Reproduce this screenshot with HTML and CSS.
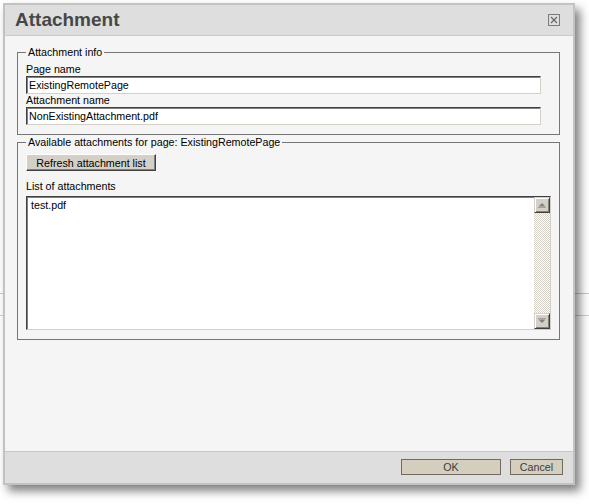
FILE: index.html
```html
<!DOCTYPE html>
<html>
<head>
<meta charset="utf-8">
<link rel="stylesheet" href="styles.css">
</head>
<body>
<div class="dialog">
  <div class="dlg-header">
    <h1 class="dlg-title">Attachment</h1>
    <button class="close-btn" aria-label="Close">
      <svg width="12" height="12" viewBox="0 0 12 12"><rect x="0.5" y="0.5" width="11" height="11" fill="none" stroke="#7c7c7c"/><path d="M3 3L9 9M9 3L3 9" stroke="#666" stroke-width="1.1"/></svg>
    </button>
  </div>
  <div class="dlg-body">
    <fieldset class="group group-info">
      <legend class="group-legend">Attachment info</legend>
      <label class="field-label">Page name</label>
      <input class="text-input" type="text" value="ExistingRemotePage">
      <label class="field-label">Attachment name</label>
      <input class="text-input" type="text" value="NonExistingAttachment.pdf">
    </fieldset>
    <fieldset class="group group-list">
      <legend class="group-legend">Available attachments for page: ExistingRemotePage</legend>
      <button class="btn-refresh">Refresh attachment list</button>
      <div class="field-label list-label">List of attachments</div>
      <div class="listbox">
        <div class="list-items">test.pdf</div>
        <div class="scrollbar">
          <div class="sb-btn"><svg width="14" height="14" viewBox="0 0 14 14"><path d="M3.5 8.5L7 5L10.5 8.5Z" fill="#808080"/><path d="M3 9.5H11" stroke="#a0a0a0"/></svg></div>
          <div class="sb-track"></div>
          <div class="sb-btn"><svg width="14" height="14" viewBox="0 0 14 14"><path d="M3.5 5.5L7 9L10.5 5.5Z" fill="#808080"/><path d="M3 4.5H11" stroke="#a0a0a0"/></svg></div>
        </div>
      </div>
    </fieldset>
  </div>
  <div class="dlg-footer">
    <button class="btn btn-ok">OK</button>
    <button class="btn btn-cancel">Cancel</button>
  </div>
</div>
</body>
</html>
```
FILE: styles.css
```css
html, body {
  margin: 0;
  padding: 0;
}
body {
  width: 589px;
  height: 504px;
  overflow: hidden;
  font-family: "Liberation Sans", Arial, sans-serif;
  font-size: 10.7px;
  color: #000;
  background:
    linear-gradient(#c8c8c8, #c8c8c8) 0 293px / 100% 1px no-repeat,
    linear-gradient(#c4d2dc, #c4d2dc) 0 315px / 100% 1px no-repeat,
    #fff;
}
.dialog {
  margin: 3px 0 0 3px;
  width: 572px;
  box-sizing: border-box;
  border: 2px solid #c2c2c2;
  box-shadow: 5px 6px 9px rgba(0, 0, 0, 0.5);
  background: #f5f5f5;
}
.dlg-header {
  height: 31px;
  box-sizing: border-box;
  background: #dedede;
  border-bottom: 1px solid #cdc9bd;
  display: flex;
  align-items: center;
  justify-content: space-between;
  padding: 0 13px 0 10px;
}
.dlg-title {
  margin: 0;
  font: 700 19px/30px "Liberation Sans", Arial, sans-serif;
  color: #474747;
}
.close-btn {
  width: 12px;
  height: 12px;
  padding: 0;
  margin: 0 0 1px 0;
  border: 0;
  background: transparent;
  display: block;
}
.close-btn svg {
  display: block;
}
.dlg-body {
  height: 416px;
  box-sizing: border-box;
  padding: 10px 13px 0 12px;
  background: #f5f5f5;
  border-bottom: 1px solid #cbc6b8;
}
.group {
  margin: 0;
  min-width: 0;
  border: 1px solid #767676;
  padding: 5px 8px 9px 8px;
}
.group-list {
  margin-top: 1px;
  padding-top: 6px;
}
.group-legend {
  padding: 0 2px;
  font-size: 10.7px;
  line-height: 12px;
}
.field-label {
  display: block;
  line-height: 13px;
}
.text-input {
  display: block;
  width: 515px;
  height: 18px;
  box-sizing: border-box;
  margin: 0;
  padding: 0 2px;
  font: 10.7px "Liberation Sans", Arial, sans-serif;
  color: #000;
  background: #fff;
  border: 1px solid;
  border-color: #404040 #d4d0c8 #d4d0c8 #404040;
  box-shadow: inset 1px 1px 0 #808080;
  outline: none;
}
.btn-refresh {
  display: block;
  width: 130px;
  height: 17px;
  margin: 0;
  padding: 0;
  font: 10.7px "Liberation Sans", Arial, sans-serif;
  color: #000;
  background: #d4d0c8;
  border: 1px solid;
  border-color: #fff #404040 #404040 #fff;
  box-shadow: inset -1px -1px 0 #808080;
}
.list-label {
  margin: 9px 0 3px;
}
.listbox {
  display: flex;
  width: 525px;
  height: 134px;
  box-sizing: border-box;
  background: #fff;
  border: 1px solid;
  border-color: #404040 #d4d0c8 #d4d0c8 #404040;
  box-shadow: inset 1px 1px 0 #808080;
}
.list-items {
  flex: 1;
  padding: 2px 4px;
  line-height: 13px;
}
.scrollbar {
  width: 16px;
  display: flex;
  flex-direction: column;
}
.sb-btn {
  width: 16px;
  height: 16px;
  box-sizing: border-box;
  background: #d4d0c8;
  border: 1px solid;
  border-color: #d4d0c8 #404040 #404040 #d4d0c8;
  box-shadow: inset 1px 1px 0 #fff, inset -1px -1px 0 #808080;
}
.sb-btn svg {
  display: block;
}
.sb-track {
  flex: 1;
  background: repeating-conic-gradient(#d4d0c8 0 25%, #fff 0 50%) 0 0 / 2px 2px;
}
.dlg-footer {
  height: 31px;
  box-sizing: border-box;
  background: #dedede;
  display: flex;
  justify-content: flex-end;
  align-items: flex-start;
  gap: 9px;
  padding: 7px 10px 0 0;
}
.btn {
  height: 16px;
  margin: 0;
  padding: 0;
  font: 10.7px/14px "Liberation Sans", Arial, sans-serif;
  color: #3c3c3c;
  background: #d4cebe;
  border: 1px solid #706b5d;
}
.btn-ok {
  width: 100px;
}
.btn-cancel {
  width: 53px;
}
```
